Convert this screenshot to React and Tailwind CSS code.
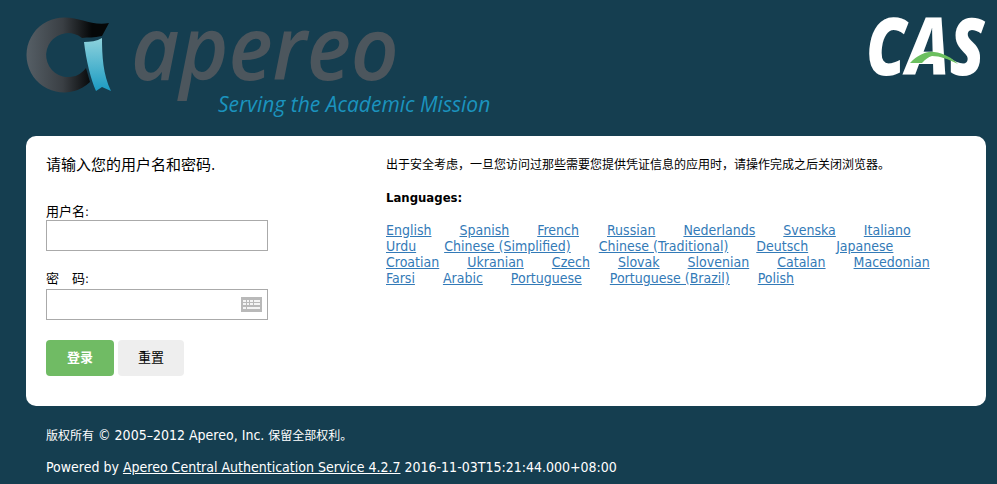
import React from "react";

const languages = [
  "English", "Spanish", "French", "Russian", "Nederlands", "Svenska", "Italiano",
  "Urdu", "Chinese (Simplified)", "Chinese (Traditional)", "Deutsch", "Japanese",
  "Croatian", "Ukranian", "Czech", "Slovak", "Slovenian", "Catalan", "Macedonian",
  "Farsi", "Arabic", "Portuguese", "Portuguese (Brazil)", "Polish",
];

function ApereoLogo() {
  return (
    <svg width="510" height="136" viewBox="0 0 510 136" className="overflow-visible">
      <defs>
        <linearGradient id="ring" x1="27" y1="0" x2="92" y2="0" gradientUnits="userSpaceOnUse">
          <stop offset="0" stopColor="#555e65" />
          <stop offset="0.55" stopColor="#3a3f44" />
          <stop offset="1" stopColor="#050708" />
        </linearGradient>
        <linearGradient id="ribbon" x1="0" y1="38" x2="0" y2="91" gradientUnits="userSpaceOnUse">
          <stop offset="0" stopColor="#8ed2dc" />
          <stop offset="1" stopColor="#1b9bc3" />
        </linearGradient>
      </defs>
      <path
        d="M90 82 A37.5 37.5 0 1 1 65 17.5 C80 17.5 92 26 109 23 L102 36 C94 38 88 37 82 38 A22 22 0 1 0 86 68 Z"
        fill="url(#ring)"
      />
      <path
        d="M84 42 C90 42 97 41 102 38 C102 55 103 75 111 91 L102 87 L96 91 C91 80 86 60 84 42 Z"
        fill="url(#ribbon)"
      />
      <text
        transform="translate(131 80) scale(0.95 1)"
        fontFamily="'Open Sans', sans-serif"
        fontStyle="italic"
        fontWeight="600"
        fontSize="88"
        fill="#4c565d"
      >
        apereo
      </text>
      <text
        x="218"
        y="112"
        fontFamily="'Open Sans', sans-serif"
        fontStyle="italic"
        fontSize="21"
        fill="#1b93be"
      >
        Serving the Academic Mission
      </text>
    </svg>
  );
}

function CasLogo() {
  return (
    <svg width="122" height="136" viewBox="0 0 122 136" className="overflow-visible">
      <text
        transform="translate(0 75) scale(0.8 1)"
        fontFamily="'Open Sans', sans-serif"
        fontWeight="800"
        fontStyle="italic"
        fontSize="80"
        fill="#ffffff"
      >
        CAS
      </text>
      <path d="M44 63 C52 55 60 51 68 52 C78 53 86 58 92 64 C82 59 74 56 66 56 C62 57 60 59 56 63 Z" fill="#6bbf5f" />
    </svg>
  );
}

function KeyboardIcon() {
  return (
    <svg width="21" height="15" viewBox="0 0 21 15" className="absolute right-[6px] top-[8px]">
      <rect width="21" height="15" fill="#b9b9b9" />
      <g fill="#f4f4f4">
        <rect x="2" y="3" width="3" height="2" />
        <rect x="6" y="3" width="2" height="2" />
        <rect x="9" y="3" width="3" height="2" />
        <rect x="13" y="3" width="6" height="2" />
        <rect x="2" y="6" width="3" height="2" />
        <rect x="6" y="6" width="2" height="2" />
        <rect x="9" y="6" width="3" height="2" />
        <rect x="13" y="6" width="6" height="2" />
        <rect x="2" y="10" width="3" height="2" />
        <rect x="6" y="10" width="13" height="2" />
      </g>
    </svg>
  );
}

export default function App() {
  return (
    <div className="min-h-[484px] bg-[#153e50] font-['DejaVu_Sans_Condensed','DejaVu_Sans','Noto_Sans_CJK_SC',sans-serif] text-[13px] overflow-hidden">
      <header className="flex justify-between h-[136px]">
        <ApereoLogo />
        <div className="mr-[9px]">
          <CasLogo />
        </div>
      </header>

      <main className="mx-[26px] w-[960px] h-[270px] bg-white rounded-[10px] flex text-black">
        <section className="w-[360px] pl-[20px] pt-[20px]">
          <h2 className="text-[15px] leading-[18px]">请输入您的用户名和密码.</h2>
          <label className="block mt-[30px] leading-[16px]">用户名:</label>
          <input className="block w-[222px] h-[31px] border border-[#aaaaaa] bg-white" />
          <label className="block mt-[20px] leading-[16px]">密　码:</label>
          <div className="relative mt-[2px] w-[222px]">
            <input type="password" className="block w-full h-[31px] border border-[#aaaaaa] bg-white" />
            <KeyboardIcon />
          </div>
          <div className="flex gap-[4px] mt-[20px]">
            <button className="w-[68px] h-[36px] rounded-[4px] bg-[#70bb64] text-white font-bold">登录</button>
            <button className="w-[66px] h-[36px] rounded-[4px] bg-[#eeeeee] text-black">重置</button>
          </div>
        </section>

        <section className="pt-[21px]">
          <p className="text-[12px] leading-[16px]">
            出于安全考虑，一旦您访问过那些需要您提供凭证信息的应用时，请操作完成之后关闭浏览器。
          </p>
          <h3 className="mt-[17px] font-bold leading-[16px]">Languages:</h3>
          <div className="mt-[16px] w-[570px] flex flex-wrap gap-x-[28px] text-[14px] leading-[16px]">
            {languages.map((lang) => (
              <a key={lang} href="#" className="text-[#337ab7] underline">
                {lang}
              </a>
            ))}
          </div>
        </section>
      </main>

      <footer className="pl-[46px] text-white text-[14px] leading-[16px]">
        <p className="mt-[21px]">
          <span className="text-[12px]">版权所有</span> © 2005–2012 Apereo, Inc.{" "}
          <span className="text-[12px]">保留全部权利。</span>
        </p>
        <p className="mt-[15px]">
          Powered by{" "}
          <a href="#" className="underline">
            Apereo Central Authentication Service 4.2.7
          </a>{" "}
          2016-11-03T15:21:44.000+08:00
        </p>
      </footer>
    </div>
  );
}
